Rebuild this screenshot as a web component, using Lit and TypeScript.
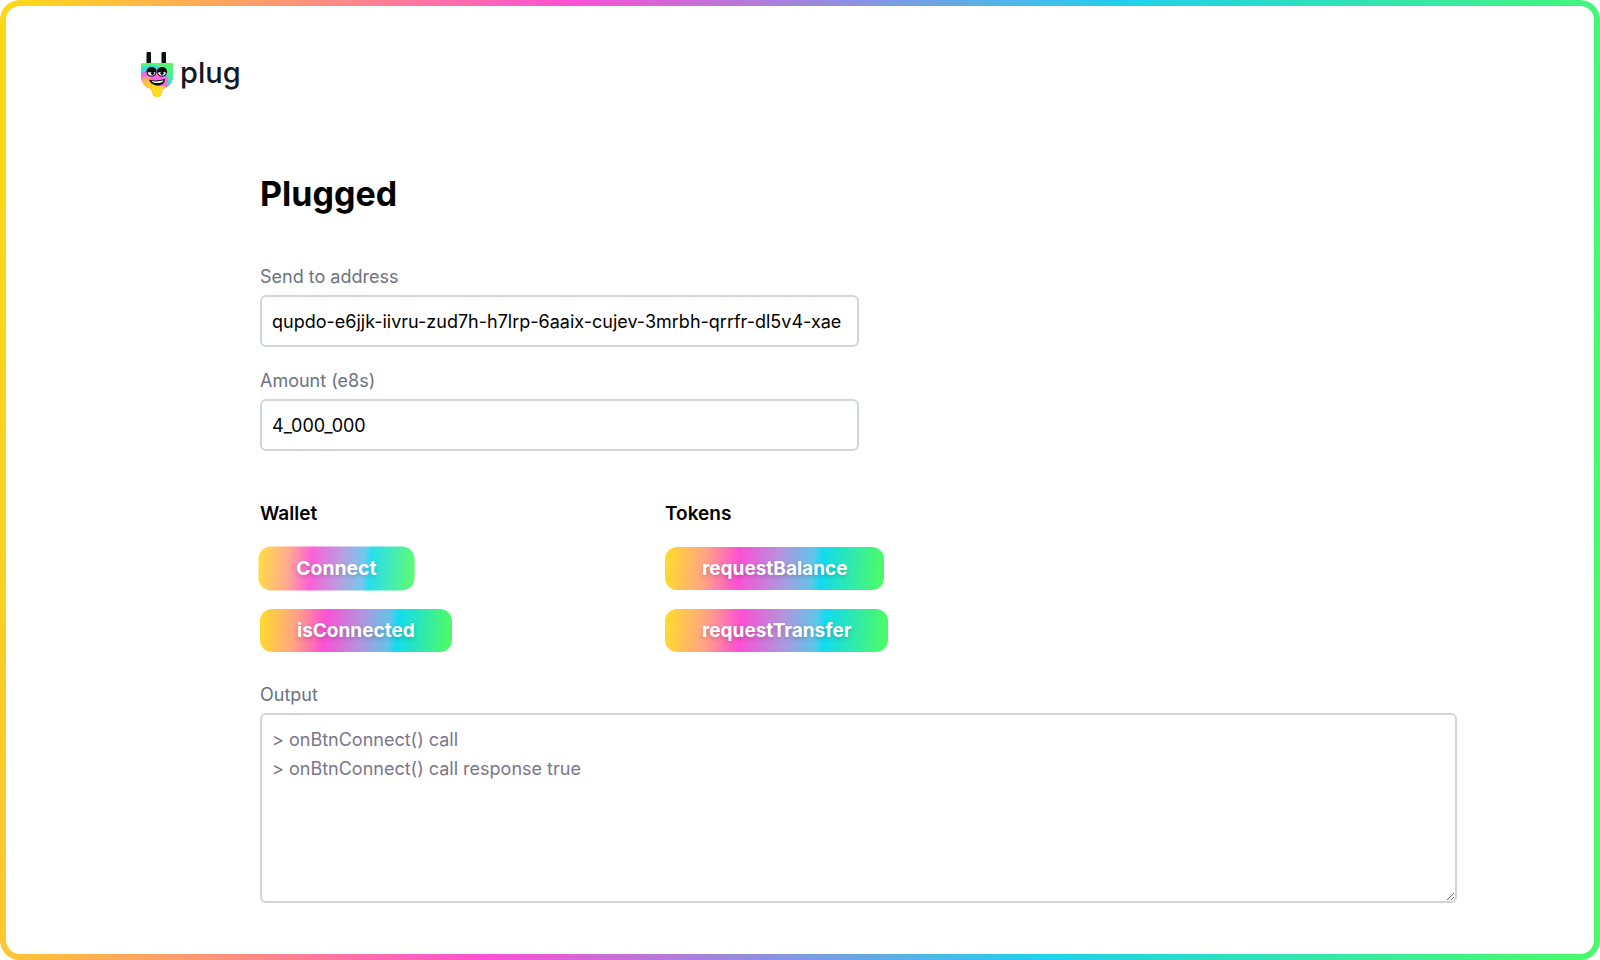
import { LitElement, html, css } from "lit";
import { customElement, property, state } from "lit/decorators.js";

@customElement("plug-logo")
export class PlugLogo extends LitElement {
  static styles = css`
    :host {
      display: inline-flex;
      align-items: center;
      gap: 6px;
      color: #111827;
    }
    .mark {
      display: block;
      width: 34px;
      height: 48px;
    }
    .word {
      font-size: 29px;
      line-height: 36px;
      font-weight: 500;
      padding-bottom: 3px;
    }
  `;

  render() {
    return html`
      <svg class="mark" viewBox="0 0 34 48" aria-hidden="true">
        <defs>
          <clipPath id="head">
            <path d="M1 15Q1 13 3 13H31Q33 13 33 15V25C33 32 29.500 36.500 24 38.500Q22 39.500 22 41.500L20.500 45.500Q20 47 18.500 47H15.500Q14 47 13.500 45.500L12 41.500Q12 39.500 10 38.500C4.500 36.500 1 32 1 25Z" />
          </clipPath>
          <linearGradient id="tail" x1="0" y1="0" x2="1" y2="1">
            <stop offset="0" stop-color="#ffb04c" />
            <stop offset="0.5" stop-color="#ffdc1c" />
          </linearGradient>
          <linearGradient id="side" x1="0" y1="0" x2="0" y2="1">
            <stop offset="0" stop-color="#5df56d" />
            <stop offset="0.6" stop-color="#4feb9a" />
            <stop offset="1" stop-color="#38dce6" />
          </linearGradient>
        </defs>
        <rect x="6.500" y="2" width="4.500" height="13" rx="1" fill="#07110f" />
        <rect x="21.500" y="2" width="4.500" height="13" rx="1" fill="#07110f" />
        <g clip-path="url(#head)">
          <rect width="34" height="48" fill="#5df56d" />
          <path d="M0 17C7 17 9 14 17 16C24 19 28 18 34 26V48H0Z" fill="#35dbe6" />
          <path d="M0 23C6 23 8 17 14 18C22 21 25 27 34 32V48H0Z" fill="#f868dc" />
          <path d="M0 30C4 27 7 24 11 29C15 34 20 36 34 37V48H0Z" fill="#ffa07e" />
          <path d="M0 33C5 29 8 30 11 33C16 37 21 37 28 37V48H0Z" fill="url(#tail)" />
          <path d="M29 13H34V33L26 36C29 32 29 25 25 20Z" fill="url(#side)" />
        </g>
        <path d="M6.500 21.500C6.500 18.500 9 17 11.500 17C14.500 17 16.500 19 16.500 21.500C16.500 24.500 14.500 26.500 11.500 26.500C8.500 26.500 6.500 24.500 6.500 21.500Z" fill="#07110f" />
        <path d="M17 21.500C17 18.500 19.500 17 22 17C25 17 27 19 27 21.500C27 24.500 25 26.500 22 26.500C19 26.500 17 24.500 17 21.500Z" fill="#07110f" />
        <path d="M7.500 22.500C10 22 13 22 15.500 22.500C15 24.700 13.500 25.600 11.500 25.600C9.500 25.600 8 24.700 7.500 22.500Z" fill="#fff" />
        <path d="M18 22.500C20.500 22 23.500 22 26 22.500C25.500 24.700 24 25.600 22 25.600C20 25.600 18.500 24.700 18 22.500Z" fill="#fff" />
        <circle cx="12.500" cy="23.300" r="1.600" fill="#07110f" />
        <circle cx="22" cy="23.300" r="1.600" fill="#07110f" />
        <path d="M9 29.500C14 31 20 30.500 25 28.700C25 33 22 35.500 18 35.500C13.500 35.500 10 33 9 29.500Z" fill="#07110f" />
        <path d="M11.500 31C15 31.800 20 31.500 23.500 30.300C23 32.200 21.500 33 18 33.100C14.500 33.200 12.500 32.500 11.500 31Z" fill="#fff" />
      </svg>
      <span class="word">plug</span>
    `;
  }
}

@customElement("plug-button")
export class PlugButton extends LitElement {
  @property() label = "";
  @property({ type: Boolean, reflect: true }) active = false;

  static styles = css`
    :host {
      display: block;
    }
    .button {
      display: block;
      margin: 0;
      border: 0;
      border-radius: 12px;
      padding: 7px 37px;
      font: 700 19px/29px Inter, "Liberation Sans", sans-serif;
      color: #fff;
      text-shadow: 0 2px 4px rgba(0, 0, 0, 0.22);
      background: linear-gradient(
        95deg,
        #ffdb2e 1%,
        #ffa285 19%,
        #fb50d5 34%,
        #b592de 52%,
        #62c4ea 67%,
        #12daf0 71%,
        #4cfa68 98%
      );
      cursor: pointer;
    }
    :host([active]) .button {
      opacity: 0.9;
      transform: scale(1.02);
    }
  `;

  render() {
    return html`<button class="button" type="button">${this.label}</button>`;
  }
}

@customElement("app-root")
export class AppRoot extends LitElement {
  @state() private address = "qupdo-e6jjk-iivru-zud7h-h7lrp-6aaix-cujev-3mrbh-qrrfr-dl5v4-xae";
  @state() private amount = "4_000_000";
  @state() private output = "> onBtnConnect() call\n> onBtnConnect() call response true";

  static styles = css`
    :host {
      display: block;
      font: 400 18px/29px Inter, "Liberation Sans", sans-serif;
      color: #000;
      background: #fff;
    }
    .frame {
      box-sizing: border-box;
      min-height: 100vh;
      border: 6px solid transparent;
      border-radius: 20px;
      padding: 44px 137px 50px 134px;
      background:
        linear-gradient(#fff, #fff) padding-box,
        linear-gradient(95deg, #ffd719 1%, #fb50d5 34%, #1fd1ec 67%, #48fa6b 98%) border-box;
    }
    .logo {
      display: flex;
    }
    .content {
      padding: 76px 0 0 120px;
    }
    .title {
      margin: 0 0 48px;
      font-size: 34px;
      line-height: 40px;
      font-weight: 700;
    }
    .field {
      display: flex;
      flex-direction: column;
      gap: 4px;
    }
    .form {
      display: flex;
      flex-direction: column;
      gap: 19px;
      width: 50%;
      margin-bottom: 49px;
    }
    .label {
      color: #6b7280;
    }
    .box {
      box-sizing: border-box;
      width: 100%;
      margin: 0;
      border: 2px solid #d1d5db;
      border-radius: 6px;
      padding: 10px 10px 9px;
      font: inherit;
      color: #000;
      background: #fff;
      outline: none;
    }
    .log {
      display: block;
      height: 190px;
      color: #7a768a;
      resize: vertical;
    }
    .groups {
      display: grid;
      grid-template-columns: repeat(3, 1fr);
      gap: 18px;
      margin-bottom: 28px;
    }
    .group {
      display: flex;
      flex-direction: column;
      align-items: flex-start;
      gap: 19px;
    }
    .heading {
      margin: 0;
      font-size: 19px;
      line-height: 28px;
      font-weight: 600;
    }
  `;

  render() {
    return html`
      <main class="frame">
        <header class="logo"><plug-logo></plug-logo></header>
        <section class="content">
          <h1 class="title">Plugged</h1>
          <div class="form">
            <div class="field">
              <label class="label" for="address">Send to address</label>
              <input class="box" id="address" type="text" .value=${this.address} />
            </div>
            <div class="field">
              <label class="label" for="amount">Amount (e8s)</label>
              <input class="box" id="amount" type="text" .value=${this.amount} />
            </div>
          </div>
          <div class="groups">
            <div class="group">
              <h2 class="heading">Wallet</h2>
              <plug-button label="Connect" active></plug-button>
              <plug-button label="isConnected"></plug-button>
            </div>
            <div class="group">
              <h2 class="heading">Tokens</h2>
              <plug-button label="requestBalance"></plug-button>
              <plug-button label="requestTransfer"></plug-button>
            </div>
          </div>
          <div class="field">
            <label class="label" for="output">Output</label>
            <textarea class="box log" id="output" readonly .value=${this.output}></textarea>
          </div>
        </section>
      </main>
    `;
  }
}
